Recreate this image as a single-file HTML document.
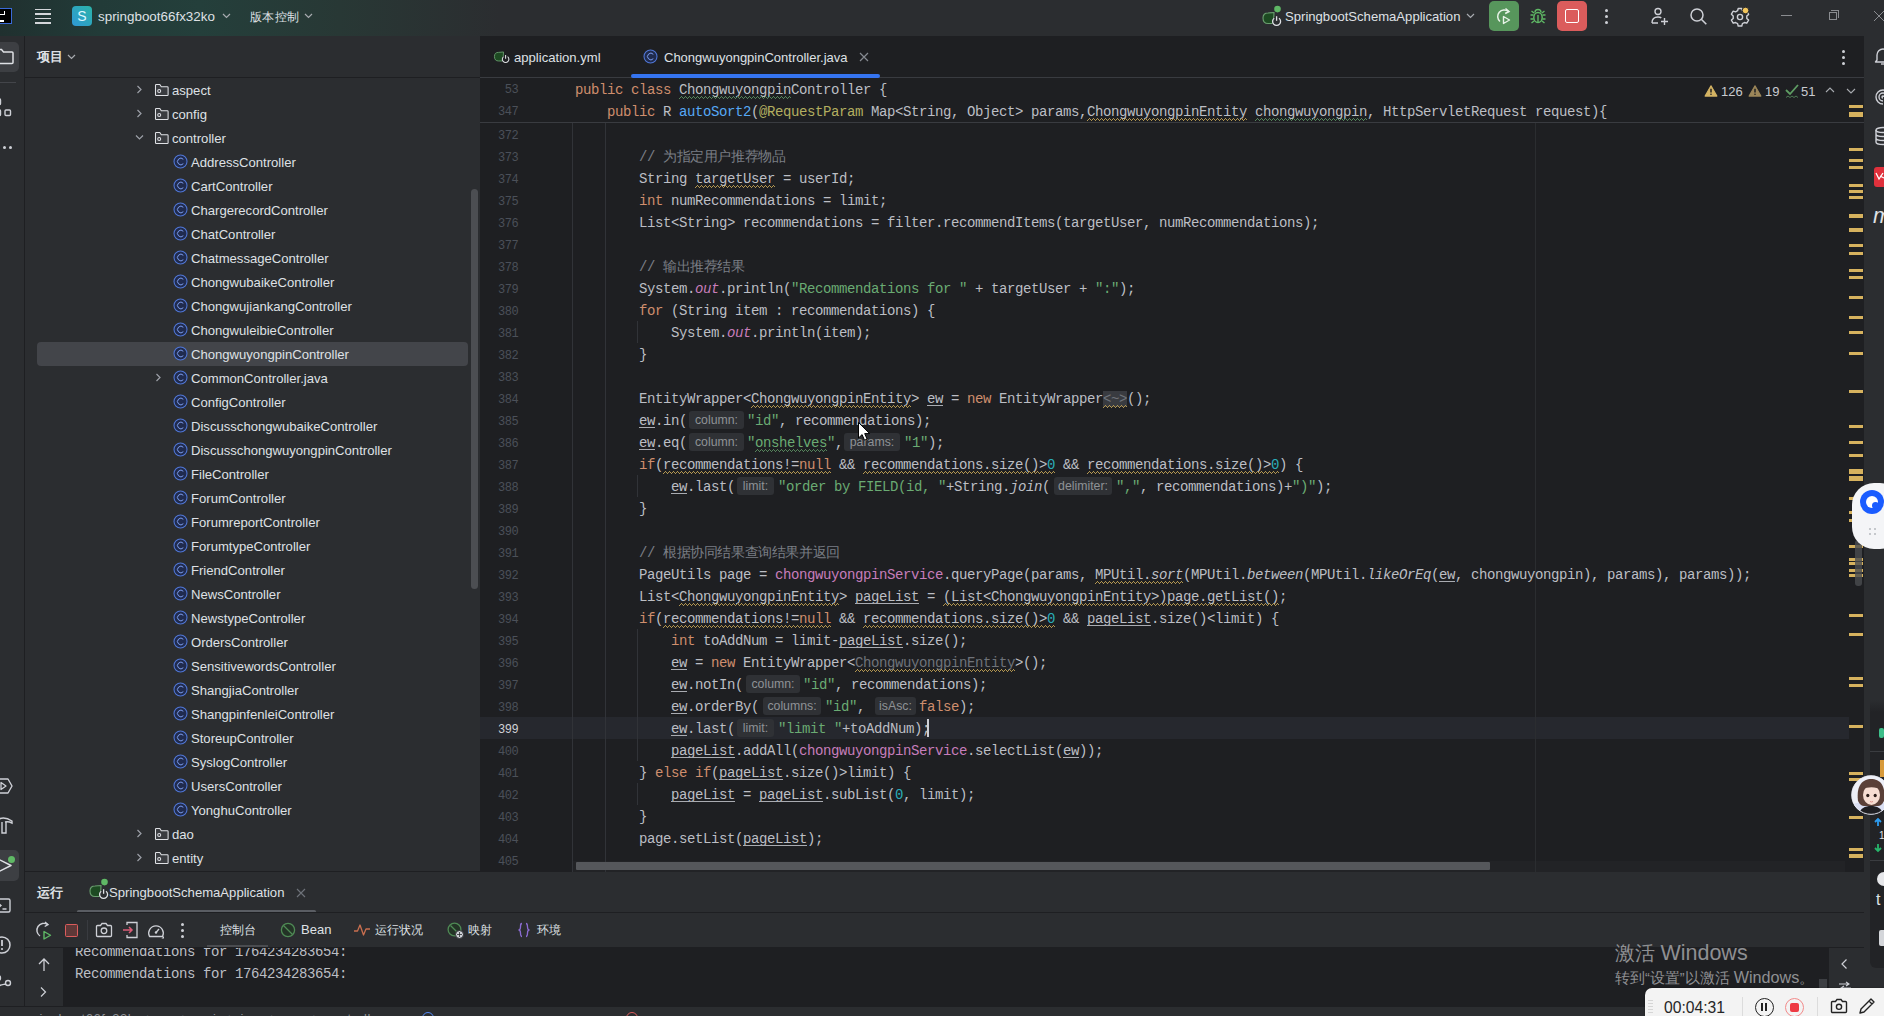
<!DOCTYPE html><html><head><meta charset="utf-8"><style>
*{margin:0;padding:0;box-sizing:border-box}
html,body{width:1884px;height:1016px;overflow:hidden;background:#1e1f22;font-family:"Liberation Sans",sans-serif;color:#dfe1e5;font-size:13px}
.a{position:absolute}
.t{position:absolute;white-space:nowrap;line-height:24px;height:24px;font-size:13.1px}
.cl{position:absolute;left:575px;height:22px;line-height:22px;font-family:"Liberation Mono",monospace;font-size:14px;letter-spacing:-0.40137px;white-space:pre;color:#bcbec4}
.ln{position:absolute;left:480px;width:38.4px;height:22px;line-height:22px;padding-top:1px;font-family:"Liberation Mono",monospace;font-size:12px;letter-spacing:-0.4px;color:#4b5059;text-align:right;white-space:pre}
.k{color:#cf8e6d}.s{color:#6aab73}.n{color:#2aacb8}.c{color:#7a7e85}.f{color:#c77dbb}.m{color:#56a8f5}.an{color:#b3ae60}.i{font-style:italic}
.u{text-decoration:underline;text-decoration-color:#bcbec4;text-underline-offset:2px}
.w{text-decoration:underline wavy #a88d45;text-decoration-thickness:1px;text-underline-offset:3px;text-decoration-skip-ink:none}
.wg{text-decoration:underline wavy #4e7a55;text-decoration-thickness:1px;text-underline-offset:3px;text-decoration-skip-ink:none}
.gr{color:#6f737a}.fold{background:#393b40}
.h{display:inline-block;position:relative;height:22px;vertical-align:top}
.h b{position:absolute;top:1px;height:18px;border-radius:3px;background:#2f3135;color:#8e9196;font-family:"Liberation Sans",sans-serif;font-weight:normal;font-size:12.3px;letter-spacing:0;line-height:18px;text-align:center}
.mk{position:absolute;left:1849px;width:14px;background:#d6b25e}
svg{position:absolute;overflow:visible}
</style></head><body>
<div class="a" style="left:0;top:0;width:1884px;height:36px;background:#2b2d30"></div>
<div class="a" style="left:0;top:0;width:760px;height:36px;background:linear-gradient(90deg,#20302f 0px,#223b38 100px,#243f3b 200px,#283835 340px,#2b2d30 500px)"></div>
<div class="a" style="left:0;top:36px;width:24px;height:970px;background:#2b2d30"></div>
<div class="a" style="left:24px;top:36px;width:1px;height:970px;background:#1e1f22"></div>
<div class="a" style="left:25px;top:36px;width:455px;height:835px;background:#2b2d30"></div>
<div class="a" style="left:480px;top:36px;width:1384px;height:836px;background:#1e1f22"></div>
<div class="a" style="left:1864px;top:36px;width:20px;height:970px;background:#2b2d30"></div>
<div class="a" style="left:25px;top:871px;width:1839px;height:1px;background:#1e1f22"></div>
<div class="a" style="left:25px;top:872px;width:1839px;height:134px;background:#2b2d30"></div>
<div class="a" style="left:0;top:1006px;width:1884px;height:10px;background:#2b2d30;border-top:1px solid #1e1f22"></div>
<div class="t" style="left:37px;top:45px;font-size:13px;color:#dfe1e5;font-weight:bold">项目</div>
<div class="a" style="left:25px;top:77px;width:455px;height:1px;background:#1e1f22"></div>
<svg style="left:67px;top:54px" width="9" height="6" viewBox="0 0 9 6"><path d="M1 1l3.5 3.5L8 1" fill="none" stroke="#a8abb0" stroke-width="1.2"/></svg>
<div class="a" style="left:37px;top:342px;width:431px;height:24px;border-radius:4px;background:#43454a"></div>
<svg style="left:136px;top:85px" width="7" height="9" viewBox="0 0 7 9"><path d="M1.5 1l3.5 3.5L1.5 8" fill="none" stroke="#9da0a8" stroke-width="1.2"/></svg>
<svg style="left:154px;top:83px" width="15" height="13" viewBox="0 0 15 13"><path d="M1.5 2.3V11.7a.8.8 0 0 0 .8.8h11a.8.8 0 0 0 .8-.8V4.6a.8.8 0 0 0-.8-.8H7.3L5.8 1.5H2.3a.8.8 0 0 0-.8.8z" fill="#3a3c40" stroke="#dfe1e5" stroke-width="1.05"/><circle cx="5.2" cy="8" r="1.5" fill="none" stroke="#dfe1e5" stroke-width="1.05"/></svg>
<div class="t" style="left:172px;top:79px;color:#dfe1e5">aspect</div>
<svg style="left:136px;top:109px" width="7" height="9" viewBox="0 0 7 9"><path d="M1.5 1l3.5 3.5L1.5 8" fill="none" stroke="#9da0a8" stroke-width="1.2"/></svg>
<svg style="left:154px;top:107px" width="15" height="13" viewBox="0 0 15 13"><path d="M1.5 2.3V11.7a.8.8 0 0 0 .8.8h11a.8.8 0 0 0 .8-.8V4.6a.8.8 0 0 0-.8-.8H7.3L5.8 1.5H2.3a.8.8 0 0 0-.8.8z" fill="#3a3c40" stroke="#dfe1e5" stroke-width="1.05"/><circle cx="5.2" cy="8" r="1.5" fill="none" stroke="#dfe1e5" stroke-width="1.05"/></svg>
<div class="t" style="left:172px;top:103px;color:#dfe1e5">config</div>
<svg style="left:135px;top:134px" width="9" height="7" viewBox="0 0 9 7"><path d="M1 1.5l3.5 3.5L8 1.5" fill="none" stroke="#9da0a8" stroke-width="1.2"/></svg>
<svg style="left:154px;top:131px" width="15" height="13" viewBox="0 0 15 13"><path d="M1.5 2.3V11.7a.8.8 0 0 0 .8.8h11a.8.8 0 0 0 .8-.8V4.6a.8.8 0 0 0-.8-.8H7.3L5.8 1.5H2.3a.8.8 0 0 0-.8.8z" fill="#3a3c40" stroke="#dfe1e5" stroke-width="1.05"/><circle cx="5.2" cy="8" r="1.5" fill="none" stroke="#dfe1e5" stroke-width="1.05"/></svg>
<div class="t" style="left:172px;top:127px;color:#dfe1e5">controller</div>
<svg style="left:173px;top:154px" width="15" height="15" viewBox="0 0 15 15"><circle cx="7.5" cy="7.5" r="6.5" fill="#202b4e" stroke="#5077d8" stroke-width="1.05"/><path d="M10.3 5.3a3.3 3.3 0 1 0 0 4.4" fill="none" stroke="#7d9ef0" stroke-width="1"/></svg>
<div class="t" style="left:191px;top:151px;color:#dfe1e5">AddressController</div>
<svg style="left:173px;top:178px" width="15" height="15" viewBox="0 0 15 15"><circle cx="7.5" cy="7.5" r="6.5" fill="#202b4e" stroke="#5077d8" stroke-width="1.05"/><path d="M10.3 5.3a3.3 3.3 0 1 0 0 4.4" fill="none" stroke="#7d9ef0" stroke-width="1"/></svg>
<div class="t" style="left:191px;top:175px;color:#dfe1e5">CartController</div>
<svg style="left:173px;top:202px" width="15" height="15" viewBox="0 0 15 15"><circle cx="7.5" cy="7.5" r="6.5" fill="#202b4e" stroke="#5077d8" stroke-width="1.05"/><path d="M10.3 5.3a3.3 3.3 0 1 0 0 4.4" fill="none" stroke="#7d9ef0" stroke-width="1"/></svg>
<div class="t" style="left:191px;top:199px;color:#dfe1e5">ChargerecordController</div>
<svg style="left:173px;top:226px" width="15" height="15" viewBox="0 0 15 15"><circle cx="7.5" cy="7.5" r="6.5" fill="#202b4e" stroke="#5077d8" stroke-width="1.05"/><path d="M10.3 5.3a3.3 3.3 0 1 0 0 4.4" fill="none" stroke="#7d9ef0" stroke-width="1"/></svg>
<div class="t" style="left:191px;top:223px;color:#dfe1e5">ChatController</div>
<svg style="left:173px;top:250px" width="15" height="15" viewBox="0 0 15 15"><circle cx="7.5" cy="7.5" r="6.5" fill="#202b4e" stroke="#5077d8" stroke-width="1.05"/><path d="M10.3 5.3a3.3 3.3 0 1 0 0 4.4" fill="none" stroke="#7d9ef0" stroke-width="1"/></svg>
<div class="t" style="left:191px;top:247px;color:#dfe1e5">ChatmessageController</div>
<svg style="left:173px;top:274px" width="15" height="15" viewBox="0 0 15 15"><circle cx="7.5" cy="7.5" r="6.5" fill="#202b4e" stroke="#5077d8" stroke-width="1.05"/><path d="M10.3 5.3a3.3 3.3 0 1 0 0 4.4" fill="none" stroke="#7d9ef0" stroke-width="1"/></svg>
<div class="t" style="left:191px;top:271px;color:#dfe1e5">ChongwubaikeController</div>
<svg style="left:173px;top:298px" width="15" height="15" viewBox="0 0 15 15"><circle cx="7.5" cy="7.5" r="6.5" fill="#202b4e" stroke="#5077d8" stroke-width="1.05"/><path d="M10.3 5.3a3.3 3.3 0 1 0 0 4.4" fill="none" stroke="#7d9ef0" stroke-width="1"/></svg>
<div class="t" style="left:191px;top:295px;color:#dfe1e5">ChongwujiankangController</div>
<svg style="left:173px;top:322px" width="15" height="15" viewBox="0 0 15 15"><circle cx="7.5" cy="7.5" r="6.5" fill="#202b4e" stroke="#5077d8" stroke-width="1.05"/><path d="M10.3 5.3a3.3 3.3 0 1 0 0 4.4" fill="none" stroke="#7d9ef0" stroke-width="1"/></svg>
<div class="t" style="left:191px;top:319px;color:#dfe1e5">ChongwuleibieController</div>
<svg style="left:173px;top:346px" width="15" height="15" viewBox="0 0 15 15"><circle cx="7.5" cy="7.5" r="6.5" fill="#202b4e" stroke="#5077d8" stroke-width="1.05"/><path d="M10.3 5.3a3.3 3.3 0 1 0 0 4.4" fill="none" stroke="#7d9ef0" stroke-width="1"/></svg>
<div class="t" style="left:191px;top:343px;color:#dfe1e5">ChongwuyongpinController</div>
<svg style="left:155px;top:373px" width="7" height="9" viewBox="0 0 7 9"><path d="M1.5 1l3.5 3.5L1.5 8" fill="none" stroke="#9da0a8" stroke-width="1.2"/></svg>
<svg style="left:173px;top:370px" width="15" height="15" viewBox="0 0 15 15"><circle cx="7.5" cy="7.5" r="6.5" fill="#202b4e" stroke="#5077d8" stroke-width="1.05"/><path d="M10.3 5.3a3.3 3.3 0 1 0 0 4.4" fill="none" stroke="#7d9ef0" stroke-width="1"/></svg>
<div class="t" style="left:191px;top:367px;color:#dfe1e5">CommonController.java</div>
<svg style="left:173px;top:394px" width="15" height="15" viewBox="0 0 15 15"><circle cx="7.5" cy="7.5" r="6.5" fill="#202b4e" stroke="#5077d8" stroke-width="1.05"/><path d="M10.3 5.3a3.3 3.3 0 1 0 0 4.4" fill="none" stroke="#7d9ef0" stroke-width="1"/></svg>
<div class="t" style="left:191px;top:391px;color:#dfe1e5">ConfigController</div>
<svg style="left:173px;top:418px" width="15" height="15" viewBox="0 0 15 15"><circle cx="7.5" cy="7.5" r="6.5" fill="#202b4e" stroke="#5077d8" stroke-width="1.05"/><path d="M10.3 5.3a3.3 3.3 0 1 0 0 4.4" fill="none" stroke="#7d9ef0" stroke-width="1"/></svg>
<div class="t" style="left:191px;top:415px;color:#dfe1e5">DiscusschongwubaikeController</div>
<svg style="left:173px;top:442px" width="15" height="15" viewBox="0 0 15 15"><circle cx="7.5" cy="7.5" r="6.5" fill="#202b4e" stroke="#5077d8" stroke-width="1.05"/><path d="M10.3 5.3a3.3 3.3 0 1 0 0 4.4" fill="none" stroke="#7d9ef0" stroke-width="1"/></svg>
<div class="t" style="left:191px;top:439px;color:#dfe1e5">DiscusschongwuyongpinController</div>
<svg style="left:173px;top:466px" width="15" height="15" viewBox="0 0 15 15"><circle cx="7.5" cy="7.5" r="6.5" fill="#202b4e" stroke="#5077d8" stroke-width="1.05"/><path d="M10.3 5.3a3.3 3.3 0 1 0 0 4.4" fill="none" stroke="#7d9ef0" stroke-width="1"/></svg>
<div class="t" style="left:191px;top:463px;color:#dfe1e5">FileController</div>
<svg style="left:173px;top:490px" width="15" height="15" viewBox="0 0 15 15"><circle cx="7.5" cy="7.5" r="6.5" fill="#202b4e" stroke="#5077d8" stroke-width="1.05"/><path d="M10.3 5.3a3.3 3.3 0 1 0 0 4.4" fill="none" stroke="#7d9ef0" stroke-width="1"/></svg>
<div class="t" style="left:191px;top:487px;color:#dfe1e5">ForumController</div>
<svg style="left:173px;top:514px" width="15" height="15" viewBox="0 0 15 15"><circle cx="7.5" cy="7.5" r="6.5" fill="#202b4e" stroke="#5077d8" stroke-width="1.05"/><path d="M10.3 5.3a3.3 3.3 0 1 0 0 4.4" fill="none" stroke="#7d9ef0" stroke-width="1"/></svg>
<div class="t" style="left:191px;top:511px;color:#dfe1e5">ForumreportController</div>
<svg style="left:173px;top:538px" width="15" height="15" viewBox="0 0 15 15"><circle cx="7.5" cy="7.5" r="6.5" fill="#202b4e" stroke="#5077d8" stroke-width="1.05"/><path d="M10.3 5.3a3.3 3.3 0 1 0 0 4.4" fill="none" stroke="#7d9ef0" stroke-width="1"/></svg>
<div class="t" style="left:191px;top:535px;color:#dfe1e5">ForumtypeController</div>
<svg style="left:173px;top:562px" width="15" height="15" viewBox="0 0 15 15"><circle cx="7.5" cy="7.5" r="6.5" fill="#202b4e" stroke="#5077d8" stroke-width="1.05"/><path d="M10.3 5.3a3.3 3.3 0 1 0 0 4.4" fill="none" stroke="#7d9ef0" stroke-width="1"/></svg>
<div class="t" style="left:191px;top:559px;color:#dfe1e5">FriendController</div>
<svg style="left:173px;top:586px" width="15" height="15" viewBox="0 0 15 15"><circle cx="7.5" cy="7.5" r="6.5" fill="#202b4e" stroke="#5077d8" stroke-width="1.05"/><path d="M10.3 5.3a3.3 3.3 0 1 0 0 4.4" fill="none" stroke="#7d9ef0" stroke-width="1"/></svg>
<div class="t" style="left:191px;top:583px;color:#dfe1e5">NewsController</div>
<svg style="left:173px;top:610px" width="15" height="15" viewBox="0 0 15 15"><circle cx="7.5" cy="7.5" r="6.5" fill="#202b4e" stroke="#5077d8" stroke-width="1.05"/><path d="M10.3 5.3a3.3 3.3 0 1 0 0 4.4" fill="none" stroke="#7d9ef0" stroke-width="1"/></svg>
<div class="t" style="left:191px;top:607px;color:#dfe1e5">NewstypeController</div>
<svg style="left:173px;top:634px" width="15" height="15" viewBox="0 0 15 15"><circle cx="7.5" cy="7.5" r="6.5" fill="#202b4e" stroke="#5077d8" stroke-width="1.05"/><path d="M10.3 5.3a3.3 3.3 0 1 0 0 4.4" fill="none" stroke="#7d9ef0" stroke-width="1"/></svg>
<div class="t" style="left:191px;top:631px;color:#dfe1e5">OrdersController</div>
<svg style="left:173px;top:658px" width="15" height="15" viewBox="0 0 15 15"><circle cx="7.5" cy="7.5" r="6.5" fill="#202b4e" stroke="#5077d8" stroke-width="1.05"/><path d="M10.3 5.3a3.3 3.3 0 1 0 0 4.4" fill="none" stroke="#7d9ef0" stroke-width="1"/></svg>
<div class="t" style="left:191px;top:655px;color:#dfe1e5">SensitivewordsController</div>
<svg style="left:173px;top:682px" width="15" height="15" viewBox="0 0 15 15"><circle cx="7.5" cy="7.5" r="6.5" fill="#202b4e" stroke="#5077d8" stroke-width="1.05"/><path d="M10.3 5.3a3.3 3.3 0 1 0 0 4.4" fill="none" stroke="#7d9ef0" stroke-width="1"/></svg>
<div class="t" style="left:191px;top:679px;color:#dfe1e5">ShangjiaController</div>
<svg style="left:173px;top:706px" width="15" height="15" viewBox="0 0 15 15"><circle cx="7.5" cy="7.5" r="6.5" fill="#202b4e" stroke="#5077d8" stroke-width="1.05"/><path d="M10.3 5.3a3.3 3.3 0 1 0 0 4.4" fill="none" stroke="#7d9ef0" stroke-width="1"/></svg>
<div class="t" style="left:191px;top:703px;color:#dfe1e5">ShangpinfenleiController</div>
<svg style="left:173px;top:730px" width="15" height="15" viewBox="0 0 15 15"><circle cx="7.5" cy="7.5" r="6.5" fill="#202b4e" stroke="#5077d8" stroke-width="1.05"/><path d="M10.3 5.3a3.3 3.3 0 1 0 0 4.4" fill="none" stroke="#7d9ef0" stroke-width="1"/></svg>
<div class="t" style="left:191px;top:727px;color:#dfe1e5">StoreupController</div>
<svg style="left:173px;top:754px" width="15" height="15" viewBox="0 0 15 15"><circle cx="7.5" cy="7.5" r="6.5" fill="#202b4e" stroke="#5077d8" stroke-width="1.05"/><path d="M10.3 5.3a3.3 3.3 0 1 0 0 4.4" fill="none" stroke="#7d9ef0" stroke-width="1"/></svg>
<div class="t" style="left:191px;top:751px;color:#dfe1e5">SyslogController</div>
<svg style="left:173px;top:778px" width="15" height="15" viewBox="0 0 15 15"><circle cx="7.5" cy="7.5" r="6.5" fill="#202b4e" stroke="#5077d8" stroke-width="1.05"/><path d="M10.3 5.3a3.3 3.3 0 1 0 0 4.4" fill="none" stroke="#7d9ef0" stroke-width="1"/></svg>
<div class="t" style="left:191px;top:775px;color:#dfe1e5">UsersController</div>
<svg style="left:173px;top:802px" width="15" height="15" viewBox="0 0 15 15"><circle cx="7.5" cy="7.5" r="6.5" fill="#202b4e" stroke="#5077d8" stroke-width="1.05"/><path d="M10.3 5.3a3.3 3.3 0 1 0 0 4.4" fill="none" stroke="#7d9ef0" stroke-width="1"/></svg>
<div class="t" style="left:191px;top:799px;color:#dfe1e5">YonghuController</div>
<svg style="left:136px;top:829px" width="7" height="9" viewBox="0 0 7 9"><path d="M1.5 1l3.5 3.5L1.5 8" fill="none" stroke="#9da0a8" stroke-width="1.2"/></svg>
<svg style="left:154px;top:827px" width="15" height="13" viewBox="0 0 15 13"><path d="M1.5 2.3V11.7a.8.8 0 0 0 .8.8h11a.8.8 0 0 0 .8-.8V4.6a.8.8 0 0 0-.8-.8H7.3L5.8 1.5H2.3a.8.8 0 0 0-.8.8z" fill="#3a3c40" stroke="#dfe1e5" stroke-width="1.05"/><circle cx="5.2" cy="8" r="1.5" fill="none" stroke="#dfe1e5" stroke-width="1.05"/></svg>
<div class="t" style="left:172px;top:823px;color:#dfe1e5">dao</div>
<svg style="left:136px;top:853px" width="7" height="9" viewBox="0 0 7 9"><path d="M1.5 1l3.5 3.5L1.5 8" fill="none" stroke="#9da0a8" stroke-width="1.2"/></svg>
<svg style="left:154px;top:851px" width="15" height="13" viewBox="0 0 15 13"><path d="M1.5 2.3V11.7a.8.8 0 0 0 .8.8h11a.8.8 0 0 0 .8-.8V4.6a.8.8 0 0 0-.8-.8H7.3L5.8 1.5H2.3a.8.8 0 0 0-.8.8z" fill="#3a3c40" stroke="#dfe1e5" stroke-width="1.05"/><circle cx="5.2" cy="8" r="1.5" fill="none" stroke="#dfe1e5" stroke-width="1.05"/></svg>
<div class="t" style="left:172px;top:847px;color:#dfe1e5">entity</div>
<div class="a" style="left:471px;top:189px;width:7px;height:400px;border-radius:4px;background:#4c4e52"></div>
<div class="a" style="left:480px;top:717px;width:1369px;height:22px;background:#26282e"></div>
<div class="a" style="left:1535px;top:123px;width:1px;height:739px;background:#2b2d30"></div>
<div class="a" style="left:572px;top:123px;width:1px;height:749px;background:#313338"></div>
<div class="a" style="left:605px;top:123px;width:1px;height:749px;background:#313338"></div>
<div class="a" style="left:637px;top:321px;width:1px;height:22px;background:#313338"></div>
<div class="a" style="left:637px;top:475px;width:1px;height:22px;background:#313338"></div>
<div class="a" style="left:637px;top:629px;width:1px;height:132px;background:#313338"></div>
<div class="a" style="left:637px;top:783px;width:1px;height:22px;background:#313338"></div>
<div class="ln" style="top:124px;color:#4b5059">372</div>
<div class="cl" style="top:124px;left:575px"></div>
<div class="ln" style="top:146px;color:#4b5059">373</div>
<div class="cl" style="top:146px;left:575px"><span class="c">        // 为指定用户推荐物品</span></div>
<div class="ln" style="top:168px;color:#4b5059">374</div>
<div class="cl" style="top:168px;left:575px">        String targetUser = userId;</div>
<div class="a" style="left:695px;top:185px;width:80px;height:3px;background-image:linear-gradient(90deg,transparent 2px,#b39650 2px,#b39650 3px,transparent 3px),linear-gradient(90deg,transparent 1px,#b39650 1px,#b39650 2px,transparent 2px,transparent 3px,#b39650 3px),linear-gradient(90deg,#b39650 1px,transparent 1px);background-size:4px 1px;background-repeat:repeat-x;background-position:0 0,0 1px,0 2px"></div>
<div class="ln" style="top:190px;color:#4b5059">375</div>
<div class="cl" style="top:190px;left:575px">        <span class="k">int</span> numRecommendations = limit;</div>
<div class="ln" style="top:212px;color:#4b5059">376</div>
<div class="cl" style="top:212px;left:575px">        List&lt;String&gt; recommendations = filter.recommendItems(targetUser, numRecommendations);</div>
<div class="ln" style="top:234px;color:#4b5059">377</div>
<div class="cl" style="top:234px;left:575px"></div>
<div class="ln" style="top:256px;color:#4b5059">378</div>
<div class="cl" style="top:256px;left:575px"><span class="c">        // 输出推荐结果</span></div>
<div class="ln" style="top:278px;color:#4b5059">379</div>
<div class="cl" style="top:278px;left:575px">        System.<span class="f i">out</span>.println(<span class="s">&quot;Recommendations for &quot;</span> + targetUser + <span class="s">&quot;:&quot;</span>);</div>
<div class="ln" style="top:300px;color:#4b5059">380</div>
<div class="cl" style="top:300px;left:575px">        <span class="k">for</span> (String item : recommendations) {</div>
<div class="ln" style="top:322px;color:#4b5059">381</div>
<div class="cl" style="top:322px;left:575px">            System.<span class="f i">out</span>.println(item);</div>
<div class="ln" style="top:344px;color:#4b5059">382</div>
<div class="cl" style="top:344px;left:575px">        }</div>
<div class="ln" style="top:366px;color:#4b5059">383</div>
<div class="cl" style="top:366px;left:575px"></div>
<div class="ln" style="top:388px;color:#4b5059">384</div>
<div class="cl" style="top:388px;left:575px">        EntityWrapper&lt;ChongwuyongpinEntity&gt; ew = <span class="k">new</span> EntityWrapper<span class="gr fold">&lt;~&gt;</span>();</div>
<div class="a" style="left:751px;top:405px;width:160px;height:3px;background-image:linear-gradient(90deg,transparent 2px,#b39650 2px,#b39650 3px,transparent 3px),linear-gradient(90deg,transparent 1px,#b39650 1px,#b39650 2px,transparent 2px,transparent 3px,#b39650 3px),linear-gradient(90deg,#b39650 1px,transparent 1px);background-size:4px 1px;background-repeat:repeat-x;background-position:0 0,0 1px,0 2px"></div>
<div class="a" style="left:1103px;top:405px;width:24px;height:3px;background-image:linear-gradient(90deg,transparent 2px,#b39650 2px,#b39650 3px,transparent 3px),linear-gradient(90deg,transparent 1px,#b39650 1px,#b39650 2px,transparent 2px,transparent 3px,#b39650 3px),linear-gradient(90deg,#b39650 1px,transparent 1px);background-size:4px 1px;background-repeat:repeat-x;background-position:0 0,0 1px,0 2px"></div>
<div class="a" style="left:927px;top:405px;width:16px;height:1px;background:#a9abb1"></div>
<div class="ln" style="top:410px;color:#4b5059">385</div>
<div class="cl" style="top:410px;left:575px">        ew.in(<span class="h" style="width:60px"><b style="left:2px;width:55px">column:</b></span><span class="s">&quot;id&quot;</span>, recommendations);</div>
<div class="a" style="left:639px;top:427px;width:16px;height:1px;background:#a9abb1"></div>
<div class="ln" style="top:432px;color:#4b5059">386</div>
<div class="cl" style="top:432px;left:575px">        ew.eq(<span class="h" style="width:60px"><b style="left:2px;width:55px">column:</b></span><span class="s">&quot;</span><span class="s">onshelves</span><span class="s">&quot;</span>,<span class="h" style="width:61px"><b style="left:1px;width:56px">params:</b></span><span class="s">&quot;1&quot;</span>);</div>
<div class="a" style="left:755px;top:449px;width:72px;height:3px;background-image:linear-gradient(90deg,transparent 2px,#55845b 2px,#55845b 3px,transparent 3px),linear-gradient(90deg,transparent 1px,#55845b 1px,#55845b 2px,transparent 2px,transparent 3px,#55845b 3px),linear-gradient(90deg,#55845b 1px,transparent 1px);background-size:4px 1px;background-repeat:repeat-x;background-position:0 0,0 1px,0 2px"></div>
<div class="a" style="left:639px;top:449px;width:16px;height:1px;background:#a9abb1"></div>
<div class="ln" style="top:454px;color:#4b5059">387</div>
<div class="cl" style="top:454px;left:575px">        <span class="k">if</span>(recommendations!=<span class="k">null</span> &amp;&amp; recommendations.size()&gt;<span class="n">0</span> &amp;&amp; recommendations.size()&gt;<span class="n">0</span>) {</div>
<div class="a" style="left:663px;top:471px;width:168px;height:3px;background-image:linear-gradient(90deg,transparent 2px,#b39650 2px,#b39650 3px,transparent 3px),linear-gradient(90deg,transparent 1px,#b39650 1px,#b39650 2px,transparent 2px,transparent 3px,#b39650 3px),linear-gradient(90deg,#b39650 1px,transparent 1px);background-size:4px 1px;background-repeat:repeat-x;background-position:0 0,0 1px,0 2px"></div>
<div class="a" style="left:863px;top:471px;width:192px;height:3px;background-image:linear-gradient(90deg,transparent 2px,#b39650 2px,#b39650 3px,transparent 3px),linear-gradient(90deg,transparent 1px,#b39650 1px,#b39650 2px,transparent 2px,transparent 3px,#b39650 3px),linear-gradient(90deg,#b39650 1px,transparent 1px);background-size:4px 1px;background-repeat:repeat-x;background-position:0 0,0 1px,0 2px"></div>
<div class="a" style="left:1087px;top:471px;width:192px;height:3px;background-image:linear-gradient(90deg,transparent 2px,#b39650 2px,#b39650 3px,transparent 3px),linear-gradient(90deg,transparent 1px,#b39650 1px,#b39650 2px,transparent 2px,transparent 3px,#b39650 3px),linear-gradient(90deg,#b39650 1px,transparent 1px);background-size:4px 1px;background-repeat:repeat-x;background-position:0 0,0 1px,0 2px"></div>
<div class="ln" style="top:476px;color:#4b5059">388</div>
<div class="cl" style="top:476px;left:575px">            ew.last(<span class="h" style="width:43px"><b style="left:2px;width:37px">limit:</b></span><span class="s">&quot;order by FIELD(id, &quot;</span>+String.<span class="i">join</span>(<span class="h" style="width:66px"><b style="left:4px;width:58px">delimiter:</b></span><span class="s">&quot;,&quot;</span>, recommendations)+<span class="s">&quot;)&quot;</span>);</div>
<div class="a" style="left:671px;top:493px;width:16px;height:1px;background:#a9abb1"></div>
<div class="ln" style="top:498px;color:#4b5059">389</div>
<div class="cl" style="top:498px;left:575px">        }</div>
<div class="ln" style="top:520px;color:#4b5059">390</div>
<div class="cl" style="top:520px;left:575px"></div>
<div class="ln" style="top:542px;color:#4b5059">391</div>
<div class="cl" style="top:542px;left:575px"><span class="c">        // 根据协同结果查询结果并返回</span></div>
<div class="ln" style="top:564px;color:#4b5059">392</div>
<div class="cl" style="top:564px;left:575px">        PageUtils page = <span class="f">chongwuyongpinService</span>.queryPage(params, MPUtil.<span class="i">sort</span>(MPUtil.<span class="i">between</span>(MPUtil.<span class="i">likeOrEq</span>(ew, chongwuyongpin), params), params));</div>
<div class="a" style="left:1095px;top:581px;width:88px;height:3px;background-image:linear-gradient(90deg,transparent 2px,#b39650 2px,#b39650 3px,transparent 3px),linear-gradient(90deg,transparent 1px,#b39650 1px,#b39650 2px,transparent 2px,transparent 3px,#b39650 3px),linear-gradient(90deg,#b39650 1px,transparent 1px);background-size:4px 1px;background-repeat:repeat-x;background-position:0 0,0 1px,0 2px"></div>
<div class="a" style="left:1439px;top:581px;width:16px;height:1px;background:#a9abb1"></div>
<div class="ln" style="top:586px;color:#4b5059">393</div>
<div class="cl" style="top:586px;left:575px">        List&lt;ChongwuyongpinEntity&gt; pageList = (List&lt;ChongwuyongpinEntity&gt;)page.getList();</div>
<div class="a" style="left:679px;top:603px;width:160px;height:3px;background-image:linear-gradient(90deg,transparent 2px,#b39650 2px,#b39650 3px,transparent 3px),linear-gradient(90deg,transparent 1px,#b39650 1px,#b39650 2px,transparent 2px,transparent 3px,#b39650 3px),linear-gradient(90deg,#b39650 1px,transparent 1px);background-size:4px 1px;background-repeat:repeat-x;background-position:0 0,0 1px,0 2px"></div>
<div class="a" style="left:943px;top:603px;width:336px;height:3px;background-image:linear-gradient(90deg,transparent 2px,#b39650 2px,#b39650 3px,transparent 3px),linear-gradient(90deg,transparent 1px,#b39650 1px,#b39650 2px,transparent 2px,transparent 3px,#b39650 3px),linear-gradient(90deg,#b39650 1px,transparent 1px);background-size:4px 1px;background-repeat:repeat-x;background-position:0 0,0 1px,0 2px"></div>
<div class="a" style="left:855px;top:603px;width:64px;height:1px;background:#a9abb1"></div>
<div class="ln" style="top:608px;color:#4b5059">394</div>
<div class="cl" style="top:608px;left:575px">        <span class="k">if</span>(recommendations!=<span class="k">null</span> &amp;&amp; recommendations.size()&gt;<span class="n">0</span> &amp;&amp; pageList.size()&lt;limit) {</div>
<div class="a" style="left:663px;top:625px;width:168px;height:3px;background-image:linear-gradient(90deg,transparent 2px,#b39650 2px,#b39650 3px,transparent 3px),linear-gradient(90deg,transparent 1px,#b39650 1px,#b39650 2px,transparent 2px,transparent 3px,#b39650 3px),linear-gradient(90deg,#b39650 1px,transparent 1px);background-size:4px 1px;background-repeat:repeat-x;background-position:0 0,0 1px,0 2px"></div>
<div class="a" style="left:863px;top:625px;width:192px;height:3px;background-image:linear-gradient(90deg,transparent 2px,#b39650 2px,#b39650 3px,transparent 3px),linear-gradient(90deg,transparent 1px,#b39650 1px,#b39650 2px,transparent 2px,transparent 3px,#b39650 3px),linear-gradient(90deg,#b39650 1px,transparent 1px);background-size:4px 1px;background-repeat:repeat-x;background-position:0 0,0 1px,0 2px"></div>
<div class="a" style="left:1087px;top:625px;width:64px;height:1px;background:#a9abb1"></div>
<div class="ln" style="top:630px;color:#4b5059">395</div>
<div class="cl" style="top:630px;left:575px">            <span class="k">int</span> toAddNum = limit-pageList.size();</div>
<div class="a" style="left:839px;top:647px;width:64px;height:1px;background:#a9abb1"></div>
<div class="ln" style="top:652px;color:#4b5059">396</div>
<div class="cl" style="top:652px;left:575px">            ew = <span class="k">new</span> EntityWrapper&lt;<span class="gr">ChongwuyongpinEntity</span>&gt;();</div>
<div class="a" style="left:855px;top:669px;width:160px;height:3px;background-image:linear-gradient(90deg,transparent 2px,#b39650 2px,#b39650 3px,transparent 3px),linear-gradient(90deg,transparent 1px,#b39650 1px,#b39650 2px,transparent 2px,transparent 3px,#b39650 3px),linear-gradient(90deg,#b39650 1px,transparent 1px);background-size:4px 1px;background-repeat:repeat-x;background-position:0 0,0 1px,0 2px"></div>
<div class="a" style="left:671px;top:669px;width:16px;height:1px;background:#a9abb1"></div>
<div class="ln" style="top:674px;color:#4b5059">397</div>
<div class="cl" style="top:674px;left:575px">            ew.notIn(<span class="h" style="width:60px"><b style="left:3px;width:54px">column:</b></span><span class="s">&quot;id&quot;</span>, recommendations);</div>
<div class="a" style="left:671px;top:691px;width:16px;height:1px;background:#a9abb1"></div>
<div class="ln" style="top:696px;color:#4b5059">398</div>
<div class="cl" style="top:696px;left:575px">            ew.orderBy(<span class="h" style="width:66px"><b style="left:4px;width:58px">columns:</b></span><span class="s">&quot;id&quot;</span>, <span class="h" style="width:46px"><b style="left:2px;width:41px">isAsc:</b></span><span class="k">false</span>);</div>
<div class="a" style="left:671px;top:713px;width:16px;height:1px;background:#a9abb1"></div>
<div class="ln" style="top:718px;color:#d0d2d6">399</div>
<div class="cl" style="top:718px;left:575px">            ew.last(<span class="h" style="width:43px"><b style="left:2px;width:37px">limit:</b></span><span class="s">&quot;limit &quot;</span>+toAddNum);</div>
<div class="a" style="left:671px;top:735px;width:16px;height:1px;background:#a9abb1"></div>
<div class="ln" style="top:740px;color:#4b5059">400</div>
<div class="cl" style="top:740px;left:575px">            pageList.addAll(<span class="f">chongwuyongpinService</span>.selectList(ew));</div>
<div class="a" style="left:671px;top:757px;width:64px;height:1px;background:#a9abb1"></div>
<div class="a" style="left:1063px;top:757px;width:16px;height:1px;background:#a9abb1"></div>
<div class="ln" style="top:762px;color:#4b5059">401</div>
<div class="cl" style="top:762px;left:575px">        } <span class="k">else if</span>(pageList.size()&gt;limit) {</div>
<div class="a" style="left:719px;top:779px;width:64px;height:1px;background:#a9abb1"></div>
<div class="ln" style="top:784px;color:#4b5059">402</div>
<div class="cl" style="top:784px;left:575px">            pageList = pageList.subList(<span class="n">0</span>, limit);</div>
<div class="a" style="left:671px;top:801px;width:64px;height:1px;background:#a9abb1"></div>
<div class="a" style="left:759px;top:801px;width:64px;height:1px;background:#a9abb1"></div>
<div class="ln" style="top:806px;color:#4b5059">403</div>
<div class="cl" style="top:806px;left:575px">        }</div>
<div class="ln" style="top:828px;color:#4b5059">404</div>
<div class="cl" style="top:828px;left:575px">        page.setList(pageList);</div>
<div class="a" style="left:743px;top:845px;width:64px;height:1px;background:#a9abb1"></div>
<div class="ln" style="top:850px;color:#4b5059">405</div>
<div class="cl" style="top:850px;left:575px"></div>
<div class="a" style="left:927px;top:719px;width:2px;height:18px;background:#ced0d6"></div>
<div class="a" style="left:480px;top:78px;width:1369px;height:44px;background:#1e1f22"></div>
<div class="ln" style="top:78px">53</div>
<div class="cl" style="top:79px;left:575px"><span class="k">public class </span>ChongwuyongpinController {</div>
<div class="a" style="left:679px;top:96px;width:112px;height:3px;background-image:linear-gradient(90deg,transparent 2px,#55845b 2px,#55845b 3px,transparent 3px),linear-gradient(90deg,transparent 1px,#55845b 1px,#55845b 2px,transparent 2px,transparent 3px,#55845b 3px),linear-gradient(90deg,#55845b 1px,transparent 1px);background-size:4px 1px;background-repeat:repeat-x;background-position:0 0,0 1px,0 2px"></div>
<div class="ln" style="top:100px">347</div>
<div class="cl" style="top:101px;left:575px">    <span class="k">public</span> R <span class="m">autoSort2</span>(<span class="an">@RequestParam</span> Map&lt;String, Object&gt; params,ChongwuyongpinEntity chongwuyongpin, HttpServletRequest request){</div>
<div class="a" style="left:1087px;top:118px;width:160px;height:3px;background-image:linear-gradient(90deg,transparent 2px,#b39650 2px,#b39650 3px,transparent 3px),linear-gradient(90deg,transparent 1px,#b39650 1px,#b39650 2px,transparent 2px,transparent 3px,#b39650 3px),linear-gradient(90deg,#b39650 1px,transparent 1px);background-size:4px 1px;background-repeat:repeat-x;background-position:0 0,0 1px,0 2px"></div>
<div class="a" style="left:1255px;top:118px;width:112px;height:3px;background-image:linear-gradient(90deg,transparent 2px,#55845b 2px,#55845b 3px,transparent 3px),linear-gradient(90deg,transparent 1px,#55845b 1px,#55845b 2px,transparent 2px,transparent 3px,#55845b 3px),linear-gradient(90deg,#55845b 1px,transparent 1px);background-size:4px 1px;background-repeat:repeat-x;background-position:0 0,0 1px,0 2px"></div>
<div class="a" style="left:480px;top:122px;width:1384px;height:1px;background:#393b40"></div>
<div class="a" style="left:573px;top:861px;width:1272px;height:11px;background:#222326"></div>
<div class="a" style="left:1535px;top:861px;width:1px;height:11px;background:#2b2d30"></div>
<div class="a" style="left:572px;top:861px;width:1px;height:11px;background:#313338"></div>
<div class="a" style="left:605px;top:861px;width:1px;height:11px;background:#313338"></div>
<div class="a" style="left:576px;top:862px;width:914px;height:8px;border-radius:1px;background:#55575b"></div>
<div class="a" style="left:-4px;top:8px;width:16px;height:16px;background:#000;border:1px solid #3a6ad8"></div>
<div class="a" style="left:0px;top:11px;width:5px;height:4px;border-right:1.5px solid #fff;border-bottom:1.5px solid #fff"></div>
<div class="a" style="left:0px;top:20px;width:4px;height:1.5px;background:#fff"></div>
<div class="a" style="left:35px;top:8.6px;width:16px;height:1.5px;background:#d4d6da"></div>
<div class="a" style="left:35px;top:13.1px;width:16px;height:1.5px;background:#d4d6da"></div>
<div class="a" style="left:35px;top:17.6px;width:16px;height:1.5px;background:#d4d6da"></div>
<div class="a" style="left:35px;top:22.1px;width:16px;height:1.5px;background:#d4d6da"></div>
<div class="a" style="left:72px;top:6px;width:20px;height:20px;border-radius:4px;background:linear-gradient(45deg,#2f98d6,#2bb3a8)"></div>
<div class="t" style="left:72px;top:4px;width:20px;text-align:center;font-size:14px;color:#dff8ff">S</div>
<div class="t" style="left:98px;top:5px;font-size:13.4px;color:#dfe1e5">springboot66fx32ko</div>
<svg style="left:222px;top:13px" width="9" height="6" viewBox="0 0 9 6"><path d="M1 1l3.5 3.5L8 1" fill="none" stroke="#a8abb0" stroke-width="1.2"/></svg>
<div class="t" style="left:250px;top:5px;font-size:12px;letter-spacing:0.3px;color:#dfe1e5">版本控制</div>
<svg style="left:304px;top:13px" width="9" height="6" viewBox="0 0 9 6"><path d="M1 1l3.5 3.5L8 1" fill="none" stroke="#a8abb0" stroke-width="1.2"/></svg>
<svg style="left:1260px;top:4px" width="22.0" height="22.0" viewBox="0 0 22 22"><path d="M3 14 Q3 9 8 9 L14 8.5 L13.5 19.5 L8 19.5 Q3 19.5 3 14z" fill="#1d4a22" stroke="#6a9f6f" stroke-width="1.1"/><circle cx="17.5" cy="5.1" r="3.3" fill="#5fb865"/><circle cx="16.6" cy="17.4" r="4.6" fill="#2b2d30"/><path d="M14.2 14.2 A4 4 0 1 0 19 14.2" fill="none" stroke="#dfe1e5" stroke-width="1.3"/><path d="M16.6 12.2v4.6" stroke="#dfe1e5" stroke-width="1.3"/></svg>
<div class="t" style="left:1285px;top:5px;font-size:13.1px;color:#dfe1e5">SpringbootSchemaApplication</div>
<svg style="left:1466px;top:13px" width="9" height="6" viewBox="0 0 9 6"><path d="M1 1l3.5 3.5L8 1" fill="none" stroke="#a8abb0" stroke-width="1.2"/></svg>
<div class="a" style="left:1489px;top:1px;width:30px;height:30px;border-radius:5px;background:#57965c"></div>
<svg style="left:1494px;top:6px" width="20" height="20" viewBox="0 0 20 20"><path d="M14.5 5.5A6 6 0 1 0 6 15.5" fill="none" stroke="#e8f3e8" stroke-width="1.5"/><path d="M11.5 2.5l3.5 3-3.8 2" fill="none" stroke="#e8f3e8" stroke-width="1.5"/><path d="M9.5 10.5v7l6-3.5z" fill="none" stroke="#e8f3e8" stroke-width="1.4" stroke-linejoin="round"/></svg>
<svg style="left:1529px;top:7px" width="18" height="18" viewBox="0 0 18 18"><ellipse cx="9" cy="10.5" rx="4.2" ry="5" fill="none" stroke="#5fb865" stroke-width="1.5"/><path d="M6 5.5a3 3 0 0 1 6 0M1.5 8h3M13.5 8h3M1.5 12h3M13.5 12h3M2.5 16l2.5-2M15.5 16l-2.5-2M2.5 4l2.5 2M15.5 4l-2.5 2M9 8v7" fill="none" stroke="#5fb865" stroke-width="1.4"/></svg>
<div class="a" style="left:1557px;top:1px;width:30px;height:30px;border-radius:5px;background:#db5c5c"></div>
<div class="a" style="left:1565px;top:9px;width:14px;height:14px;border-radius:2px;border:1.6px solid #fff"></div>
<div class="a" style="left:1604.5px;top:9px;width:3px;height:3px;border-radius:2px;background:#ced0d6"></div>
<div class="a" style="left:1604.5px;top:15px;width:3px;height:3px;border-radius:2px;background:#ced0d6"></div>
<div class="a" style="left:1604.5px;top:21px;width:3px;height:3px;border-radius:2px;background:#ced0d6"></div>
<svg style="left:1650px;top:6px" width="20" height="20" viewBox="0 0 20 20"><circle cx="8" cy="5.5" r="3" fill="none" stroke="#ced0d6" stroke-width="1.4"/><path d="M2 17c0-4 2.5-6 6-6 1.5 0 2.5.3 3.3.9" fill="none" stroke="#ced0d6" stroke-width="1.4"/><path d="M2 17h6M14.5 12v7M11 15.5h7" fill="none" stroke="#ced0d6" stroke-width="1.4"/></svg>
<svg style="left:1689px;top:7px" width="20" height="20" viewBox="0 0 20 20"><circle cx="8" cy="8" r="6" fill="none" stroke="#ced0d6" stroke-width="1.5"/><path d="M12.3 12.3l5 5" stroke="#ced0d6" stroke-width="1.6"/></svg>
<svg style="left:1729px;top:6px" width="22" height="22" viewBox="0 0 22 22"><path d="M9.2 2.5h3.6l.6 2.4 2 1.1 2.4-.7 1.8 3.1-1.8 1.7v2.3l1.8 1.7-1.8 3.1-2.4-.7-2 1.1-.6 2.4H9.2l-.6-2.4-2-1.1-2.4.7-1.8-3.1 1.8-1.7V9.9L2.4 8.2l1.8-3.1 2.4.7 2-1.1z" fill="none" stroke="#ced0d6" stroke-width="1.4" stroke-linejoin="round"/><circle cx="11" cy="11" r="2.6" fill="none" stroke="#ced0d6" stroke-width="1.4"/><circle cx="16.5" cy="4.5" r="3.3" fill="#f2c55c" stroke="#2b2d30" stroke-width="1"/></svg>
<div class="a" style="left:1781px;top:15px;width:11px;height:1px;background:#8a8c90"></div>
<div class="a" style="left:1829px;top:12px;width:8px;height:8px;border:1px solid #8a8c90"></div>
<div class="a" style="left:1831px;top:10px;width:8px;height:8px;border-top:1px solid #8a8c90;border-right:1px solid #8a8c90"></div>
<svg style="left:1873px;top:10px" width="12" height="12" viewBox="0 0 12 12"><path d="M1 1l10 10M11 1L1 11" stroke="#8a8c90" stroke-width="1"/></svg>
<svg style="left:492px;top:45px" width="18.04" height="18.04" viewBox="0 0 22 22"><path d="M3 14 Q3 9 8 9 L14 8.5 L13.5 19.5 L8 19.5 Q3 19.5 3 14z" fill="#1d4a22" stroke="#6a9f6f" stroke-width="1.1"/><circle cx="16.6" cy="17.4" r="4.6" fill="#1e1f22"/><path d="M14.2 14.2 A4 4 0 1 0 19 14.2" fill="none" stroke="#dfe1e5" stroke-width="1.3"/><path d="M16.6 12.2v4.6" stroke="#dfe1e5" stroke-width="1.3"/></svg>
<div class="t" style="left:514px;top:46px;font-size:13.1px;color:#dfe1e5">application.yml</div>
<svg style="left:643px;top:49px" width="15" height="15" viewBox="0 0 15 15"><circle cx="7.5" cy="7.5" r="6.5" fill="#202b4e" stroke="#5077d8" stroke-width="1.05"/><path d="M10.3 5.3a3.3 3.3 0 1 0 0 4.4" fill="none" stroke="#7d9ef0" stroke-width="1"/></svg>
<div class="t" style="left:664px;top:46px;font-size:13px;color:#dfe1e5">ChongwuyongpinController.java</div>
<svg style="left:859px;top:52px" width="10" height="10" viewBox="0 0 10 10"><path d="M1 1l8 8M9 1L1 9" stroke="#868a91" stroke-width="1.2"/></svg>
<div class="a" style="left:480px;top:77px;width:1384px;height:1px;background:#393b40"></div>
<div class="a" style="left:631px;top:74px;width:249px;height:4px;border-radius:2px;background:#3574f0"></div>
<div class="a" style="left:1842px;top:50px;width:2.5px;height:2.5px;border-radius:2px;background:#ced0d6"></div>
<div class="a" style="left:1842px;top:56px;width:2.5px;height:2.5px;border-radius:2px;background:#ced0d6"></div>
<div class="a" style="left:1842px;top:62px;width:2.5px;height:2.5px;border-radius:2px;background:#ced0d6"></div>
<div class="a" style="left:-6px;top:42px;width:25px;height:30px;border-radius:5px;background:#3d3f43"></div>
<svg style="left:-6px;top:48px" width="20" height="17" viewBox="0 0 20 17"><path d="M1 2.5v12a1 1 0 0 0 1 1h16a1 1 0 0 0 1-1V5a1 1 0 0 0-1-1H9.5L7.5 1.5H2a1 1 0 0 0-1 1z" fill="none" stroke="#dfe1e5" stroke-width="1.5"/></svg>
<div class="a" style="left:0;top:82px;width:16px;height:1px;background:#43454a"></div>
<svg style="left:-6px;top:98px" width="20" height="20" viewBox="0 0 20 20"><rect x="1" y="1" width="5.5" height="5.5" rx="1" fill="none" stroke="#ced0d6" stroke-width="1.4"/><rect x="1" y="12" width="5.5" height="5.5" rx="1" fill="none" stroke="#ced0d6" stroke-width="1.4"/><rect x="11" y="12" width="5.5" height="5.5" rx="1" fill="none" stroke="#ced0d6" stroke-width="1.4"/><path d="M3.75 6.5v5.5" stroke="#ced0d6" stroke-width="1.4"/></svg>
<div class="a" style="left:3px;top:146px;width:3px;height:3px;border-radius:2px;background:#ced0d6"></div>
<div class="a" style="left:9px;top:146px;width:3px;height:3px;border-radius:2px;background:#ced0d6"></div>
<svg style="left:-6px;top:776px" width="20" height="20" viewBox="0 0 20 20"><path d="M2 3h12l4 7-4 7H2z" fill="none" stroke="#ced0d6" stroke-width="1.4" stroke-linejoin="round"/><path d="M7 6.5v7l5-3.5z" fill="none" stroke="#ced0d6" stroke-width="1.3" stroke-linejoin="round"/></svg>
<svg style="left:-4px;top:815px" width="20" height="20" viewBox="0 0 20 20"><path d="M1 6c3-4 9-4 15 0v2c-3-1.5-5-1.5-7-1" fill="none" stroke="#ced0d6" stroke-width="1.4"/><path d="M6 7v11h4V7" fill="none" stroke="#ced0d6" stroke-width="1.4"/></svg>
<div class="a" style="left:-6px;top:850px;width:25px;height:31px;border-radius:5px;background:#3d3f43"></div>
<svg style="left:-4px;top:857px" width="20" height="17" viewBox="0 0 20 17"><path d="M1 1.5l14 7-14 7" fill="none" stroke="#dfe1e5" stroke-width="1.5" stroke-linejoin="round"/></svg>
<div class="a" style="left:8px;top:856px;width:7px;height:7px;border-radius:4px;background:#5fb865"></div>
<svg style="left:-6px;top:896px" width="20" height="20" viewBox="0 0 20 20"><rect x="1" y="3" width="15" height="13" rx="1.5" fill="none" stroke="#ced0d6" stroke-width="1.4"/><path d="M4 7l3 2.5-3 2.5M8.5 13h4" fill="none" stroke="#ced0d6" stroke-width="1.3"/></svg>
<svg style="left:-8px;top:935px" width="20" height="20" viewBox="0 0 20 20"><circle cx="10" cy="10" r="8" fill="none" stroke="#ced0d6" stroke-width="1.5"/><path d="M10 5v6" stroke="#ced0d6" stroke-width="1.8"/><circle cx="10" cy="14" r="1.1" fill="#ced0d6"/></svg>
<svg style="left:-6px;top:974px" width="20" height="20" viewBox="0 0 20 20"><circle cx="4" cy="4" r="2.5" fill="none" stroke="#ced0d6" stroke-width="1.4"/><circle cx="14" cy="9" r="2.5" fill="none" stroke="#ced0d6" stroke-width="1.4"/><path d="M4 6.5V18M4 14c0-3 3-3 8-4" fill="none" stroke="#ced0d6" stroke-width="1.4"/></svg>
<div class="t" style="left:37px;top:881px;font-size:12.5px;font-weight:bold;color:#dfe1e5">运行</div>
<svg style="left:87px;top:877px" width="22.0" height="22.0" viewBox="0 0 22 22"><path d="M3 14 Q3 9 8 9 L14 8.5 L13.5 19.5 L8 19.5 Q3 19.5 3 14z" fill="#1d4a22" stroke="#6a9f6f" stroke-width="1.1"/><circle cx="17.5" cy="5.1" r="3.3" fill="#5fb865"/><circle cx="16.6" cy="17.4" r="4.6" fill="#2b2d30"/><path d="M14.2 14.2 A4 4 0 1 0 19 14.2" fill="none" stroke="#dfe1e5" stroke-width="1.3"/><path d="M16.6 12.2v4.6" stroke="#dfe1e5" stroke-width="1.3"/></svg>
<div class="t" style="left:109px;top:881px;font-size:13.1px;color:#dfe1e5">SpringbootSchemaApplication</div>
<svg style="left:296px;top:888px" width="10" height="10" viewBox="0 0 10 10"><path d="M1 1l8 8M9 1L1 9" stroke="#6f737a" stroke-width="1.1"/></svg>
<div class="a" style="left:77px;top:910px;width:239px;height:3px;border-radius:2px;background:#5a5d63"></div>
<div class="a" style="left:25px;top:912px;width:1839px;height:1px;background:#1e1f22"></div>
<svg style="left:35px;top:921px" width="20" height="20" viewBox="0 0 20 20"><path d="M12.5 3.5A6.5 6.5 0 1 0 5 15" fill="none" stroke="#ced0d6" stroke-width="1.4"/><path d="M10 1l3 2.7-3.3 1.8" fill="none" stroke="#ced0d6" stroke-width="1.4"/><path d="M9 10.5v7.5l6.5-3.75z" fill="none" stroke="#5fb865" stroke-width="1.4" stroke-linejoin="round"/></svg>
<div class="a" style="left:65px;top:924px;width:13px;height:13px;border:1.4px solid #db5c5c;background:#5e3838;border-radius:1.5px"></div>
<div class="a" style="left:87px;top:920px;width:1px;height:20px;background:#393b40"></div>
<svg style="left:95px;top:921px" width="18" height="18" viewBox="0 0 18 18"><path d="M1.5 5.5a1 1 0 0 1 1-1h3l1.5-2h4l1.5 2h3a1 1 0 0 1 1 1v9a1 1 0 0 1-1 1h-13a1 1 0 0 1-1-1z" fill="none" stroke="#ced0d6" stroke-width="1.3"/><circle cx="9" cy="9.8" r="2.8" fill="none" stroke="#ced0d6" stroke-width="1.3"/></svg>
<svg style="left:122px;top:921px" width="18" height="18" viewBox="0 0 18 18"><path d="M5 4V1.5h10v15H5V14" fill="none" stroke="#ced0d6" stroke-width="1.3"/><path d="M1 9h9M7 6l3 3-3 3" fill="none" stroke="#db5c77" stroke-width="1.5"/></svg>
<svg style="left:146px;top:921px" width="20" height="18" viewBox="0 0 20 18"><path d="M3.5 15.5A7.3 7.3 0 1 1 16.5 15.5z" fill="none" stroke="#ced0d6" stroke-width="1.3" stroke-linejoin="round"/><path d="M10 11.5l3-3.5" stroke="#ced0d6" stroke-width="1.3"/><circle cx="10" cy="11.5" r="1.2" fill="#ced0d6"/><path d="M15.5 17.5l2.5-2.5v2.5z" fill="#ced0d6"/></svg>
<div class="a" style="left:180.5px;top:923px;width:3px;height:3px;border-radius:2px;background:#ced0d6"></div>
<div class="a" style="left:180.5px;top:929px;width:3px;height:3px;border-radius:2px;background:#ced0d6"></div>
<div class="a" style="left:180.5px;top:935px;width:3px;height:3px;border-radius:2px;background:#ced0d6"></div>
<div class="t" style="left:220px;top:918px;font-size:12px;color:#dfe1e5">控制台</div>
<div class="a" style="left:207px;top:945px;width:61px;height:2px;background:#4a4c50"></div>
<svg style="left:280px;top:922px" width="16" height="16" viewBox="0 0 16 16"><circle cx="8" cy="8" r="6.6" fill="#233326" stroke="#4f8a55" stroke-width="1.3"/><path d="M3.5 3.5l9 9" stroke="#4f8a55" stroke-width="1.3"/></svg>
<div class="t" style="left:301px;top:918px;font-size:13px;color:#dfe1e5">Bean</div>
<svg style="left:353px;top:922px" width="18" height="16" viewBox="0 0 18 16"><path d="M1 9h3.5l2.5-6 3.5 10 2.5-6h4" fill="none" stroke="#c96f4f" stroke-width="1.3" stroke-linejoin="round"/></svg>
<div class="t" style="left:375px;top:918px;font-size:12px;color:#dfe1e5">运行状况</div>
<svg style="left:447px;top:922px" width="18" height="18" viewBox="0 0 18 18"><circle cx="7.5" cy="7.5" r="6.4" fill="#233326" stroke="#4f8a55" stroke-width="1.3"/><path d="M3.5 3.5l8 8" stroke="#4f8a55" stroke-width="1.3"/><circle cx="12.5" cy="12.5" r="4" fill="#ced0d6" stroke="#2b2d30" stroke-width="1"/><path d="M10 12.5h5M12.5 10v5" stroke="#2b2d30" stroke-width=".8"/></svg>
<div class="t" style="left:468px;top:918px;font-size:12px;color:#dfe1e5">映射</div>
<svg style="left:517px;top:921px" width="14" height="18" viewBox="0 0 14 18"><path d="M5 2.5C3.5 2.5 3.5 3.5 3.5 6c0 2-.8 3-2 3 1.2 0 2 1 2 3 0 2.5 0 3.5 1.5 3.5M9 2.5c1.5 0 1.5 1 1.5 3.5 0 2 .8 3 2 3-1.2 0-2 1-2 3 0 2.5 0 3.5-1.5 3.5" fill="none" stroke="#8a6bd0" stroke-width="1.3"/></svg>
<div class="t" style="left:537px;top:918px;font-size:12px;color:#dfe1e5">环境</div>
<div class="a" style="left:25px;top:947px;width:1839px;height:1px;background:#1e1f22"></div>
<div class="a" style="left:63px;top:948px;width:1766px;height:58px;background:#1e1f22"></div>
<svg style="left:37px;top:957px" width="14" height="16" viewBox="0 0 14 16"><path d="M7 14V2M2 7l5-5 5 5" fill="none" stroke="#ced0d6" stroke-width="1.3"/></svg>
<svg style="left:39px;top:986px" width="9" height="12" viewBox="0 0 9 12"><path d="M2 1.5l4.5 4.5L2 10.5" fill="none" stroke="#ced0d6" stroke-width="1.2"/></svg>
<div class="a" style="left:63px;top:948px;width:1766px;height:58px;overflow:hidden"><div class="cl" style="left:12px;top:-7px">Recommendations for 1764234283654:</div><div class="cl" style="left:12px;top:15px">Recommendations for 1764234283654:</div></div>
<svg style="left:1840px;top:958px" width="9" height="12" viewBox="0 0 9 12"><path d="M6.5 1.5L2 6l4.5 4.5" fill="none" stroke="#ced0d6" stroke-width="1.2"/></svg>
<div class="a" style="left:1828px;top:948px;width:1px;height:58px;background:#1e1f22"></div>
<svg style="left:1704px;top:85px" width="14" height="12" viewBox="0 0 14 13"><path d="M7 .8L13.4 12H.6z" fill="#d4b363" stroke="#d4b363" stroke-width="1.2" stroke-linejoin="round"/><path d="M7 4v4" stroke="#1e1f22" stroke-width="1.6"/><circle cx="7" cy="10" r=".9" fill="#1e1f22"/></svg>
<div class="t" style="left:1721px;top:80px;font-size:13px;color:#c9cbd0">126</div>
<svg style="left:1748px;top:85px" width="14" height="12" viewBox="0 0 14 13"><path d="M7 .8L13.4 12H.6z" fill="#9c8659" stroke="#9c8659" stroke-width="1.2" stroke-linejoin="round"/><path d="M7 4v4" stroke="#1e1f22" stroke-width="1.6"/><circle cx="7" cy="10" r=".9" fill="#1e1f22"/></svg>
<div class="t" style="left:1765px;top:80px;font-size:13px;color:#c9cbd0">19</div>
<svg style="left:1785px;top:84px" width="14" height="15" viewBox="0 0 14 15"><path d="M1 6l4 4 8-9" fill="none" stroke="#5e9d63" stroke-width="1.8"/><path d="M1 13.5l2-1.5 2 1.5 2-1.5 2 1.5 2-1.5 2 1.5" fill="none" stroke="#4e7a55" stroke-width="1"/></svg>
<div class="t" style="left:1801px;top:80px;font-size:13px;color:#c9cbd0">51</div>
<svg style="left:1825px;top:87px" width="10" height="6" viewBox="0 0 10 6"><path d="M1 5l4-4 4 4" fill="none" stroke="#a8abb0" stroke-width="1.1"/></svg>
<svg style="left:1846px;top:88px" width="10" height="6" viewBox="0 0 10 6"><path d="M1 1l4 4 4-4" fill="none" stroke="#a8abb0" stroke-width="1.1"/></svg>
<div class="mk" style="top:105px;height:3px"></div>
<div class="mk" style="top:112px;height:5px"></div>
<div class="mk" style="top:148px;height:3px"></div>
<div class="mk" style="top:159px;height:3px"></div>
<div class="mk" style="top:166px;height:3px"></div>
<div class="mk" style="top:184px;height:3px"></div>
<div class="mk" style="top:190px;height:3px"></div>
<div class="mk" style="top:196px;height:3px"></div>
<div class="mk" style="top:214px;height:4px"></div>
<div class="mk" style="top:228px;height:4px"></div>
<div class="mk" style="top:244px;height:3px"></div>
<div class="mk" style="top:252px;height:3px"></div>
<div class="mk" style="top:269px;height:3px"></div>
<div class="mk" style="top:276px;height:3px"></div>
<div class="mk" style="top:296px;height:3px"></div>
<div class="mk" style="top:316px;height:3px"></div>
<div class="mk" style="top:331px;height:3px"></div>
<div class="mk" style="top:352px;height:3px"></div>
<div class="mk" style="top:390px;height:3px"></div>
<div class="mk" style="top:425px;height:3px"></div>
<div class="mk" style="top:441px;height:3px"></div>
<div class="mk" style="top:454px;height:3px"></div>
<div class="mk" style="top:469px;height:5px"></div>
<div class="mk" style="top:476px;height:5px"></div>
<div class="mk" style="top:497px;height:3px"></div>
<div class="mk" style="top:511px;height:3px"></div>
<div class="mk" style="top:519px;height:3px"></div>
<div class="mk" style="top:545px;height:3px"></div>
<div class="mk" style="top:558px;height:3px"></div>
<div class="mk" style="top:562px;height:3px"></div>
<div class="mk" style="top:569px;height:3px"></div>
<div class="mk" style="top:574px;height:3px"></div>
<div class="mk" style="top:614px;height:3px"></div>
<div class="mk" style="top:633px;height:3px"></div>
<div class="mk" style="top:677px;height:3px"></div>
<div class="mk" style="top:684px;height:3px"></div>
<div class="mk" style="top:725px;height:3px"></div>
<div class="mk" style="top:772px;height:3px"></div>
<div class="mk" style="top:778px;height:3px"></div>
<div class="mk" style="top:816px;height:3px"></div>
<div class="mk" style="top:848px;height:3px"></div>
<div class="mk" style="top:854px;height:4px"></div>
<div class="a" style="left:1855px;top:540px;width:7px;height:46px;border-radius:3px;background:#4a4c50;opacity:.8"></div>
<svg style="left:1873px;top:46px" width="20" height="20" viewBox="0 0 20 20"><path d="M4 14V9a6 6 0 0 1 12 0v5l1.5 2h-15z" fill="none" stroke="#ced0d6" stroke-width="1.4" stroke-linejoin="round"/><path d="M8 18h4" stroke="#ced0d6" stroke-width="1.4"/></svg>
<svg style="left:1873px;top:87px" width="20" height="20" viewBox="0 0 20 20"><path d="M10 17a7 7 0 1 1 7-7M10 14a4 4 0 1 1 4-4M10 11a1 1 0 1 1 1-1" fill="none" stroke="#ced0d6" stroke-width="1.4"/></svg>
<svg style="left:1873px;top:126px" width="20" height="20" viewBox="0 0 20 20"><ellipse cx="10" cy="4" rx="7" ry="2.5" fill="none" stroke="#ced0d6" stroke-width="1.4"/><path d="M3 4v12c0 1.4 3 2.5 7 2.5s7-1.1 7-2.5V4M3 8c0 1.4 3 2.5 7 2.5S17 9.4 17 8M3 12c0 1.4 3 2.5 7 2.5s7-1.1 7-2.5" fill="none" stroke="#ced0d6" stroke-width="1.4"/></svg>
<div class="a" style="left:1874px;top:167px;width:14px;height:20px;border-radius:3px;background:#e0313c"></div>
<svg style="left:1875px;top:171px" width="10" height="12" viewBox="0 0 10 12"><path d="M1 2l3 6 4-6M5 5l4 2" fill="none" stroke="#fff" stroke-width="1.3"/></svg>
<div class="t" style="left:1873px;top:204px;font-size:22px;font-style:italic;color:#dfe1e5;font-family:'Liberation Sans',sans-serif">m</div>
<div class="a" style="left:1852px;top:483px;width:50px;height:66px;border-radius:22px;background:#f4f5f7"></div>
<div class="a" style="left:1860px;top:490px;width:24px;height:24px;border-radius:12px;background:#1a5cff"></div>
<div class="a" style="left:1866px;top:496px;width:12px;height:12px;border-radius:6px;background:#fff"></div>
<div class="a" style="left:1872px;top:502px;width:7px;height:7px;border-radius:4px;background:#1a5cff"></div>
<div class="a" style="left:1869px;top:528px;width:2px;height:2px;background:#c5c8cc"></div>
<div class="a" style="left:1874px;top:528px;width:2px;height:2px;background:#c5c8cc"></div>
<div class="a" style="left:1869px;top:533px;width:2px;height:2px;background:#c5c8cc"></div>
<div class="a" style="left:1874px;top:533px;width:2px;height:2px;background:#c5c8cc"></div>
<div class="a" style="left:1870px;top:700px;width:14px;height:268px;background:linear-gradient(180deg,rgba(34,35,38,0) 0,#222326 12px);border-radius:0 0 0 6px"></div>
<div class="a" style="left:1879px;top:728px;width:5px;height:10px;border-radius:2px;background:#3dbf8a"></div>
<div class="a" style="left:1870px;top:751px;width:14px;height:1px;background:#3a3c40"></div>
<div class="a" style="left:1880px;top:760px;width:4px;height:17px;background:#d89a3a"></div>
<svg style="left:1851px;top:775px" width="40" height="40" viewBox="0 0 40 40"><defs><clipPath id="av"><circle cx="20" cy="20" r="19.5"/></clipPath></defs><circle cx="20" cy="20" r="19.5" fill="#eef0f8"/><g clip-path="url(#av)"><path d="M0 30 Q20 22 40 30 V40 H0z" fill="#d9def2"/><path d="M7 26 C5 10 12 4 20 4 C29 4 35 10 33 26 C31 30 29 31 27 31 L13 31 C11 31 9 30 7 26z" fill="#5a4038"/><ellipse cx="20.5" cy="20" rx="8.5" ry="10" fill="#f6ddd2"/><path d="M11 15 C13 8 27 7 30 15 C26 12 17 11 11 15z" fill="#5a4038"/><ellipse cx="16.8" cy="20.5" rx="1.6" ry="1.8" fill="#2a1c18"/><ellipse cx="24.2" cy="20.5" rx="1.6" ry="1.8" fill="#2a1c18"/><path d="M19 26.5 q1.5 1 3 0" fill="none" stroke="#d98c86" stroke-width="1"/><path d="M8 40 C9 33 14 31 20 31 C26 31 31 33 32 40z" fill="#1e1e22"/></g><circle cx="20" cy="20" r="19.3" fill="none" stroke="#e8eaf2" stroke-width="0.8"/></svg>
<svg style="left:1873px;top:817px" width="10" height="10" viewBox="0 0 10 10"><path d="M5 9V2M2 5l3-3 3 3" fill="none" stroke="#2d9cf0" stroke-width="1.8"/></svg>
<div class="t" style="left:1879px;top:829px;font-size:10px;color:#dfe1e5;line-height:14px;height:14px">1</div>
<svg style="left:1873px;top:843px" width="10" height="10" viewBox="0 0 10 10"><path d="M5 1v7M2 5l3 3 3-3" fill="none" stroke="#27b56b" stroke-width="1.8"/></svg>
<div class="a" style="left:1870px;top:860px;width:14px;height:1px;background:#3a3c40"></div>
<div class="a" style="left:1877px;top:872px;width:14px;height:14px;border-radius:7px;background:#e6e7ea"></div>
<div class="t" style="left:1876px;top:888px;font-size:16px;color:#dfe1e5">t</div>
<div class="a" style="left:1879px;top:930px;width:8px;height:16px;border-radius:2px;background:#d4d6da"></div>
<div class="a" style="left:0;top:1006px;width:1640px;height:10px;overflow:hidden"><div style="position:absolute;left:20px;top:5px;font-size:13px;line-height:16px;color:#8e9196;white-space:nowrap;letter-spacing:.5px">springboot66fx32ko &gt; src &gt; main &gt; java &gt; com &gt; controller</div></div>
<div class="a" style="left:422px;top:1012px;width:12px;height:12px;border-radius:6px;border:1.3px solid #548af7"></div>
<div class="a" style="left:626px;top:1012px;width:12px;height:12px;border-radius:6px;border:1.3px solid #db5c5c"></div>
<div class="a" style="left:1819px;top:979px;width:8px;height:10px;background:#3d3f43"></div>
<svg style="left:1838px;top:981px" width="14" height="10" viewBox="0 0 14 10"><path d="M1 3h10M8 1l3 2-3 2M13 7H3M6 5L3 7l3 2" fill="none" stroke="#ced0d6" stroke-width="1.1"/></svg>
<div class="a" style="left:1615px;top:940px;font-size:19.5px;line-height:26px;color:#8e8f92;white-space:nowrap">激活 <span style="font-size:21.5px">Windows</span></div>
<div class="a" style="left:1615px;top:967px;font-size:14.5px;line-height:20px;color:#8e8f92;white-space:nowrap">转到“设置”以激活 <span style="font-size:16.2px">Windows</span>。</div>
<div class="a" style="left:1645px;top:988px;width:250px;height:40px;border-radius:7px;background:#f3f3f3;box-shadow:0 0 2px rgba(0,0,0,.4)"></div>
<div class="a" style="left:1648px;top:1000px;width:5px;height:1px;background:#d6d6d6"></div>
<div class="a" style="left:1648px;top:1003px;width:5px;height:1px;background:#d6d6d6"></div>
<div class="a" style="left:1648px;top:1006px;width:5px;height:1px;background:#d6d6d6"></div>
<div class="a" style="left:1648px;top:1009px;width:5px;height:1px;background:#d6d6d6"></div>
<div class="a" style="left:1648px;top:1012px;width:5px;height:1px;background:#d6d6d6"></div>
<div class="a" style="left:1664px;top:997px;font-size:15.7px;line-height:22px;color:#262626;white-space:nowrap">00:04:31</div>
<div class="a" style="left:1742px;top:997px;width:1px;height:19px;background:#dcdcdc"></div>
<div class="a" style="left:1754.5px;top:997.5px;width:19px;height:19px;border-radius:10px;border:1.5px solid #222"></div>
<div class="a" style="left:1761px;top:1003px;width:2px;height:8px;background:#222"></div>
<div class="a" style="left:1765px;top:1003px;width:2px;height:8px;background:#222"></div>
<div class="a" style="left:1784.5px;top:997.5px;width:19px;height:19px;border-radius:10px;border:1.3px solid #f28b8b"></div>
<div class="a" style="left:1789.5px;top:1002.5px;width:9px;height:9px;border-radius:2px;background:#ee3a43"></div>
<div class="a" style="left:1817px;top:997px;width:1px;height:19px;background:#dcdcdc"></div>
<svg style="left:1830px;top:998px" width="18" height="16" viewBox="0 0 18 16"><path d="M1.5 4.5a1 1 0 0 1 1-1h3l1.5-2h4l1.5 2h3a1 1 0 0 1 1 1v9a1 1 0 0 1-1 1h-13a1 1 0 0 1-1-1z" fill="none" stroke="#222" stroke-width="1.4"/><circle cx="9" cy="8.8" r="2.6" fill="none" stroke="#222" stroke-width="1.4"/></svg>
<svg style="left:1858px;top:997px" width="18" height="18" viewBox="0 0 18 18"><path d="M2 16l1-4L13 2l3 3L6 15z M11 4l3 3" fill="none" stroke="#222" stroke-width="1.4" stroke-linejoin="round"/></svg>
<svg style="left:858px;top:422px" width="13" height="19" viewBox="0 0 13 19"><path d="M.5.5v15.5l3.6-3.4 2.4 5.6 2.6-1.1-2.4-5.5h5z" fill="#fff" stroke="#000" stroke-width="1" stroke-linejoin="round"/></svg>
</body></html>
